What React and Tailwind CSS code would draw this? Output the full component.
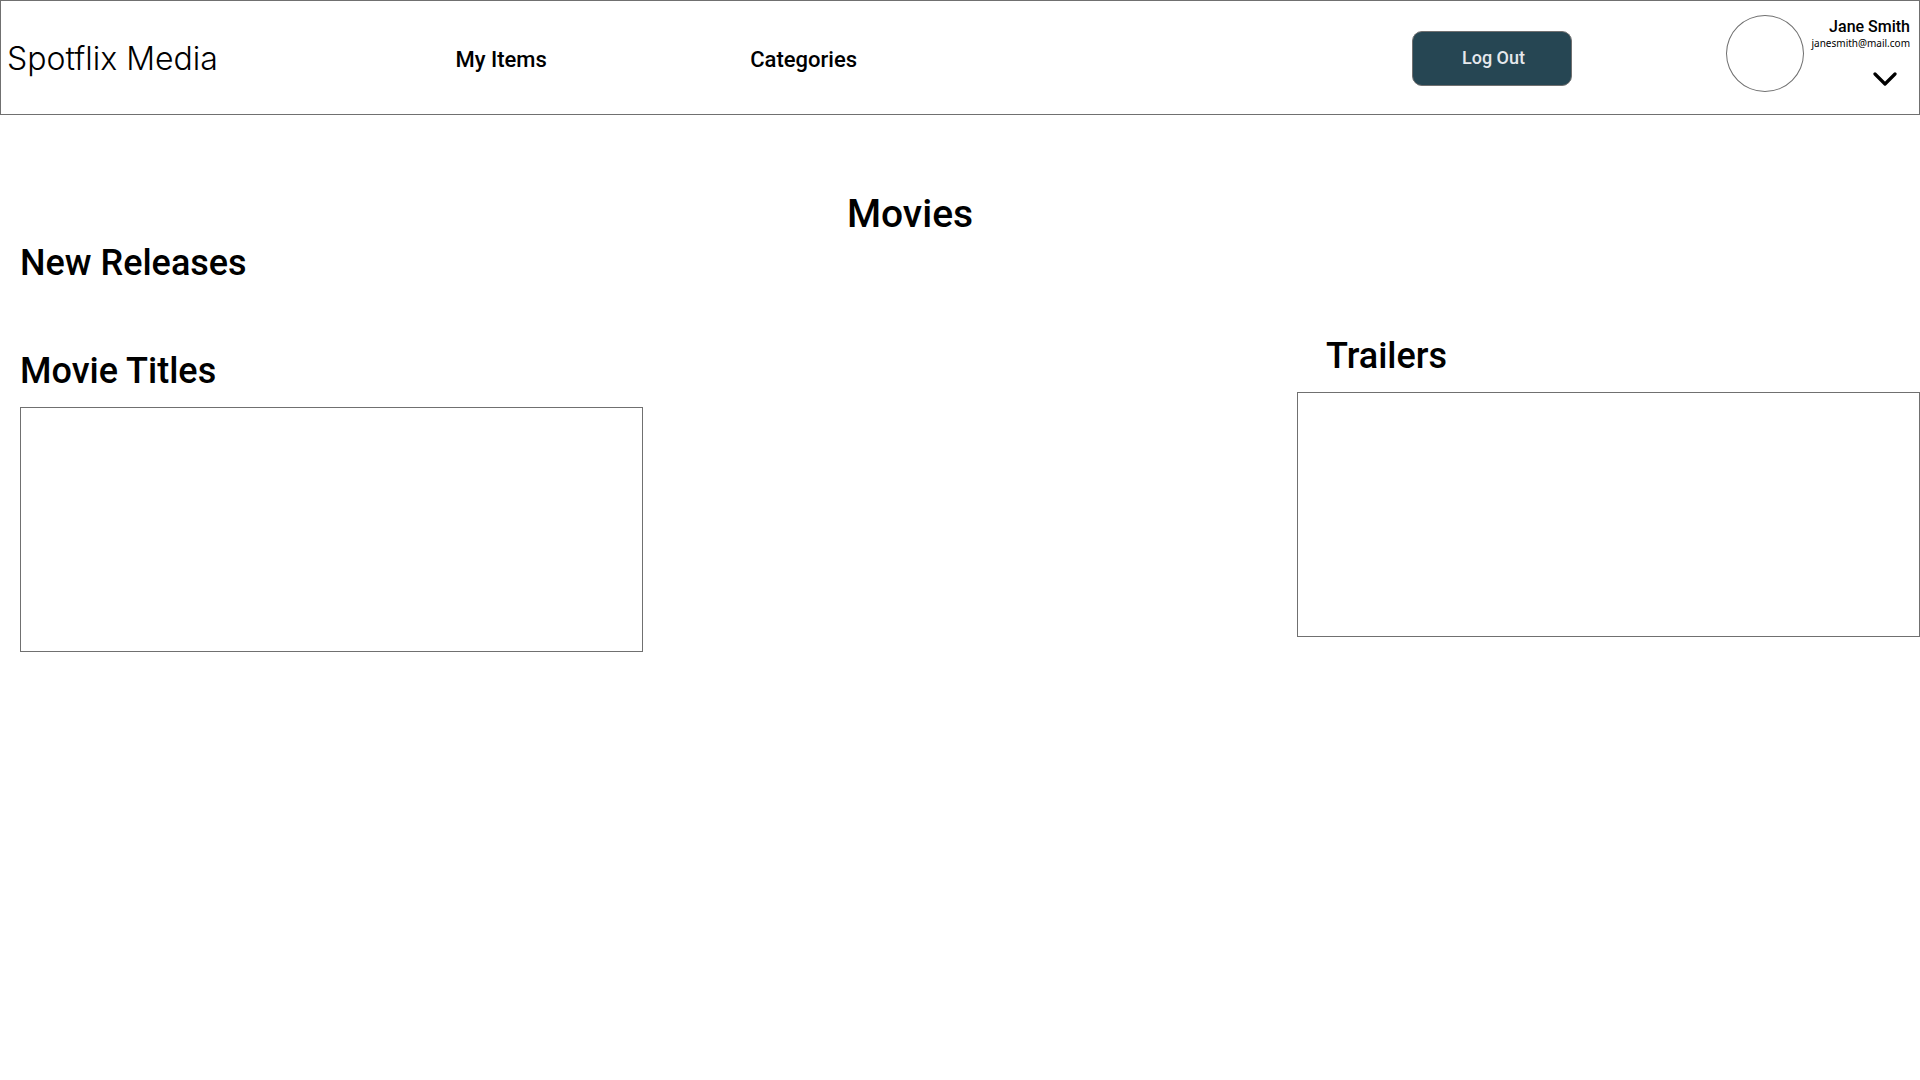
import React from "react";

function Header() {
  return (
    <header className="grid min-h-[115px] grid-cols-[455fr_295fr_662fr_315fr_193fr] border border-[#707070] bg-white">
      <a href="#home" className="self-center whitespace-nowrap pt-0.5 pl-1.5 font-['Inter',sans-serif] text-[32px] leading-10 font-light">
        Spotflix Media
      </a>
      <a href="#items" className="self-center whitespace-nowrap pt-1 text-[22px] leading-7 font-medium">My Items</a>
      <a href="#categories" className="self-center whitespace-nowrap pt-1 text-[22px] leading-7 font-medium">Categories</a>
      <div className="pt-[30px]">
        <button type="button" className="h-[55px] w-[160px] rounded-[10px] border border-[#707070] bg-[#264653] pb-0.5 pl-1 text-lg font-medium text-[#e5e8ec]">
          Log Out
        </button>
      </div>
      <div className="flex justify-between pr-[9px]">
        <div className="mt-[14px] h-[77px] w-[78px] shrink-0 rounded-[50%] border border-[#707070]" role="img" aria-label="Profile picture" />
        <div className="flex flex-col items-end pt-4">
          <span className="text-base leading-5 font-medium">Jane Smith</span>
          <span className="font-['Noto_Sans',sans-serif] text-[10px] leading-3">janesmith@mail.com</span>
          <button type="button" aria-label="Account menu" className="mt-[23px] mr-[13px]">
            <svg width="24" height="14" viewBox="0 0 24 14" fill="none" stroke="#000" strokeWidth="3.2" strokeLinecap="round" strokeLinejoin="round" aria-hidden="true">
              <path d="M2 2l10 10L22 2" />
            </svg>
          </button>
        </div>
      </div>
    </header>
  );
}

export default function App() {
  return (
    <div className="min-h-screen bg-white font-['Roboto',sans-serif] text-black">
      <Header />
      <main>
        <h1 className="mt-[75px] pr-[100px] text-center text-[39px] leading-[48px] font-medium">Movies</h1>
        <h2 className="mt-[3px] pl-5 text-[36px] leading-[44px] font-medium">New Releases</h2>
        <div className="mt-[49px] flex items-start justify-between">
          <section className="w-1/3 pt-[15px] pl-5" aria-labelledby="titles">
            <h2 id="titles" className="text-[36px] leading-[44px] font-medium">Movie Titles</h2>
            <div className="mt-[14px] mr-[-3px] h-[245px] border border-[#707070]" />
          </section>
          <section className="w-[32.45%]" aria-labelledby="trailers">
            <h2 id="trailers" className="pl-[29px] text-[36px] leading-[44px] font-medium">Trailers</h2>
            <div className="mt-[14px] h-[245px] border border-[#707070]" />
          </section>
        </div>
      </main>
    </div>
  );
}
